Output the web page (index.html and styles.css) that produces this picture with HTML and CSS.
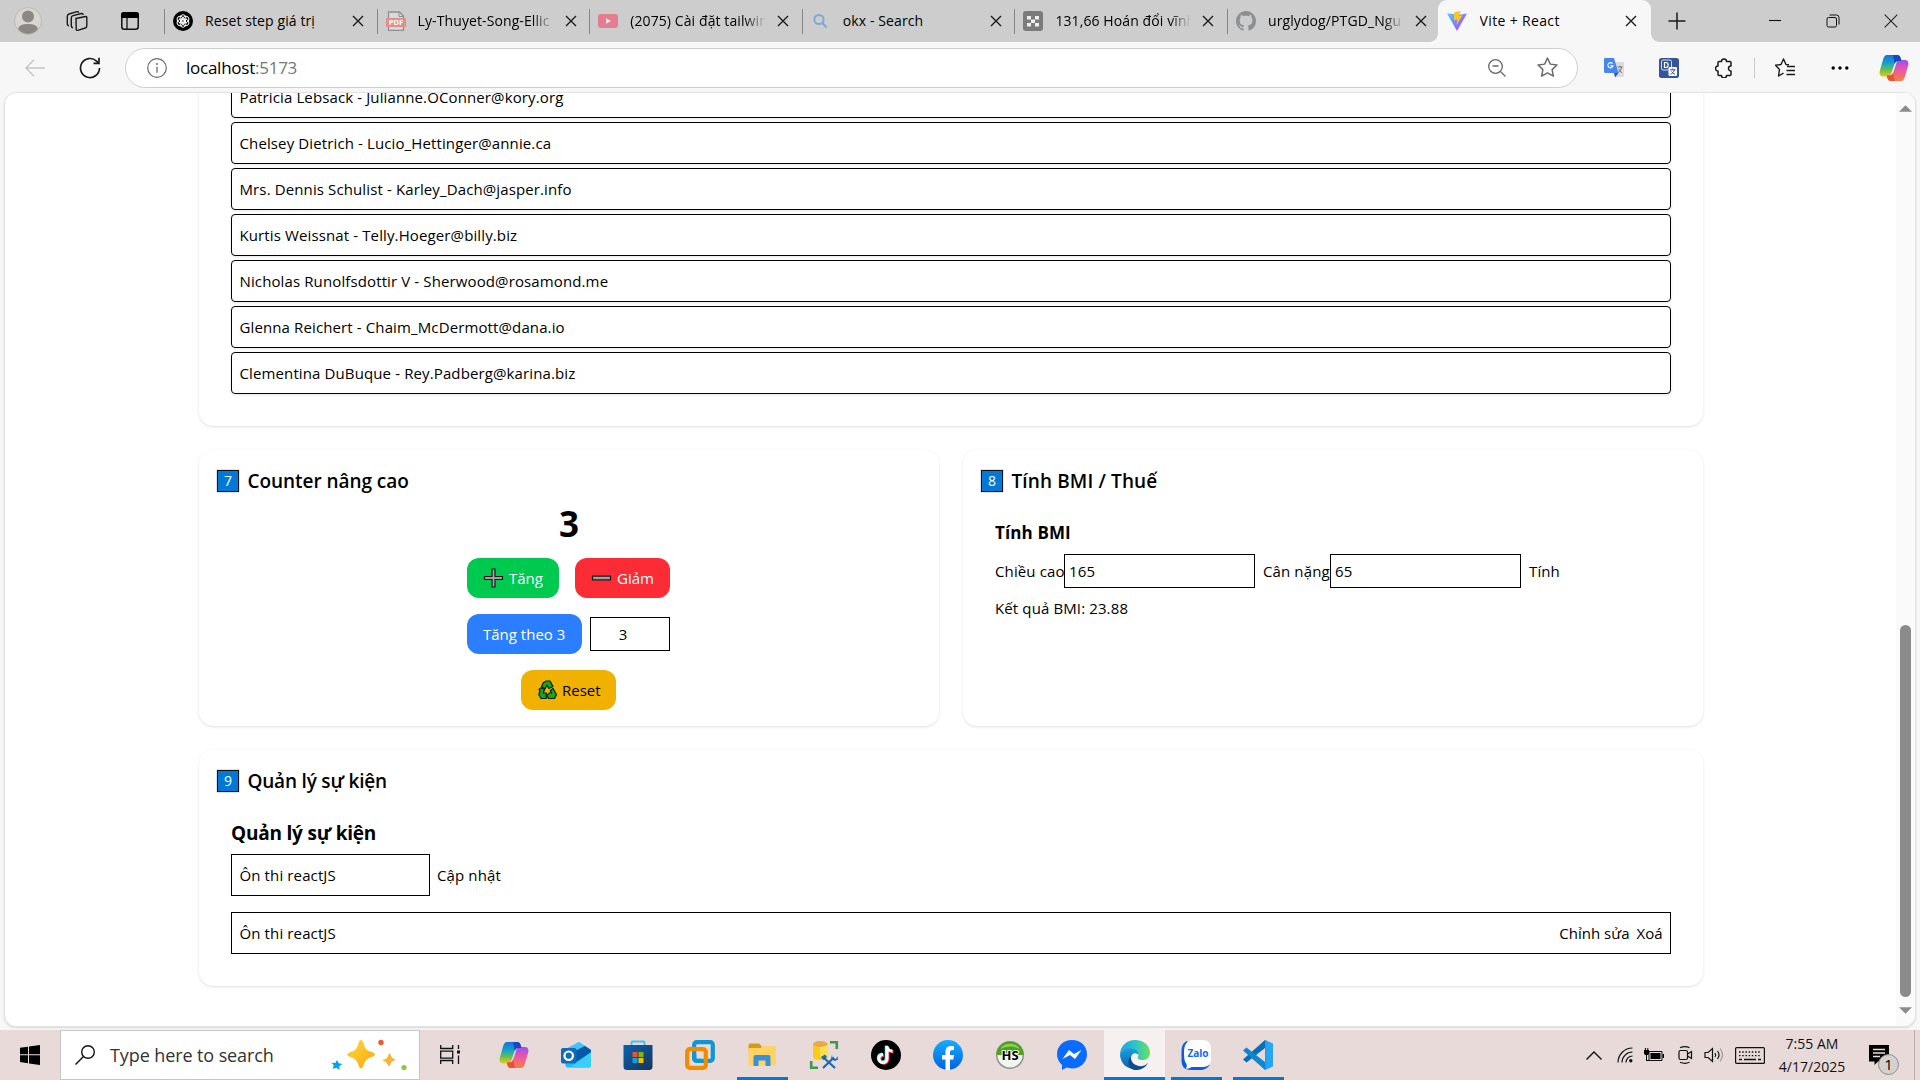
FILE: index.html
```html
<!DOCTYPE html>
<html lang="vi">
<head>
<meta charset="utf-8">
<title>Vite + React</title>
<link rel="stylesheet" href="styles.css">
</head>
<body>
<svg class="defs" width="0" height="0" aria-hidden="true">
  <defs>
    <linearGradient id="cpA" x1="0" y1="0" x2="0" y2="1"><stop offset="0" stop-color="#1b6fe0"/><stop offset=".4" stop-color="#14a5c8"/><stop offset=".7" stop-color="#6cc04a"/><stop offset="1" stop-color="#f5c518"/></linearGradient>
    <linearGradient id="cpB" x1="0" y1="0" x2="0" y2="1"><stop offset="0" stop-color="#a24bf0"/><stop offset=".5" stop-color="#ee5aa0"/><stop offset="1" stop-color="#f7813e"/></linearGradient>
    <linearGradient id="vtA" x1="0" y1="0" x2="1" y2="1"><stop offset="0" stop-color="#41d1ff"/><stop offset="1" stop-color="#bd34fe"/></linearGradient>
    <linearGradient id="gold" x1="0" y1="0" x2="1" y2="1"><stop offset="0" stop-color="#ffd84a"/><stop offset="1" stop-color="#f7a800"/></linearGradient>
    <linearGradient id="store" x1="0" y1="0" x2="1" y2="1"><stop offset="0" stop-color="#0d62b0"/><stop offset="1" stop-color="#173458"/></linearGradient>
    <linearGradient id="fb" x1="0" y1="0" x2="0" y2="1"><stop offset="0" stop-color="#18acfe"/><stop offset="1" stop-color="#0163e0"/></linearGradient>
    <linearGradient id="edA" x1="0" y1="0" x2="1" y2="0"><stop offset="0" stop-color="#1fa6e0"/><stop offset=".5" stop-color="#2cc3c8"/><stop offset="1" stop-color="#6be05a"/></linearGradient>
    <linearGradient id="edB" x1="0" y1="0" x2="0" y2="1"><stop offset="0" stop-color="#1b9de2"/><stop offset="1" stop-color="#0f5ca8"/></linearGradient>
    <symbol id="x" viewBox="0 0 14 14"><path d="M2 2l10 10M12 2L2 12" fill="none" stroke="#1a1a1a" stroke-width="1.4"/></symbol>
    <symbol id="copilot" viewBox="0 0 30 28">
      <path d="M8 1h10c2 0 3 1 3.600 3l.8 3h-3c-2 0-3.200 1-3.900 3l-3 9c-.8 2.400-2 3.500-4 3.500H4C1 22.500 0 20 .8 17L4 5.500C5 2.500 6 1 8 1z" fill="url(#cpA)"/>
      <path d="M22 27H12c-2 0-3-1-3.600-3l-.6-2.500h2.500c2 0 3.200-1 3.900-3l3-9c.8-2.400 2-3.500 4-3.500H26c3 0 4 2.500 3.200 5.500L26 22.500c-1 3-2 4.500-4 4.500z" fill="url(#cpB)"/>
      <path d="M18 1c2 0 3 1 3.600 3l.8 3h-3c-2 0-3 1-3.700 3L14 1z" fill="#1747c4"/>
      <path d="M12 27c-2 0-3-1-3.600-3l-.6-2.500h2.500c2 0 3.200-1 3.900-3L16 27z" fill="#ee4f38"/>
    </symbol>
  </defs>
</svg>

<header class="tabbar">
  <div class="tab-tools">
    <svg class="avatar" viewBox="0 0 28 28"><circle cx="14" cy="14" r="13.500" fill="#d8d6d2" stroke="#bdbab5"/><circle cx="14" cy="9.500" r="6" fill="#8b8783"/><path d="M4 22c1-4 5-5 10-5s9 1 10 5c-5 6.500-15 6.500-20 0z" fill="#8b8783"/></svg>
    <svg class="ws" viewBox="0 0 22 22" fill="none" stroke="#1a1a1a" stroke-width="1.400"><path d="M10 8.500l9.500-2a1 1 0 0 1 1.300 1V16a2 2 0 0 1-1.500 2l-7.500 2.300a1.200 1.200 0 0 1-1.600-1.200z"/><path d="M7 17.500a1.500 1.500 0 0 1-1.700-1.500V8a2.500 2.500 0 0 1 1.800-2.400L15.500 3.500c1-.2 1.600.3 1.700 1.500"/><path d="M3 15.500a1.500 1.500 0 0 1-1.700-1.500V6.500A2.500 2.500 0 0 1 3 4l8-2.300c1-.2 1.700.2 1.800 1"/></svg>
    <svg class="ta" viewBox="0 0 18 18"><rect x=".8" y=".8" width="16.400" height="16.400" rx="2.500" fill="none" stroke="#111" stroke-width="1.500"/><path d="M0 6V3a3 3 0 0 1 3-3h12a3 3 0 0 1 3 3v3z" fill="#000"/><path d="M6 6v11" stroke="#111" stroke-width="1.300"/></svg>
  </div>
  <div class="tab">
    <svg class="fav" viewBox="0 0 20 20"><circle cx="10" cy="10" r="10" fill="#000"/><g fill="none" stroke="#fff" stroke-width="1"><ellipse cx="10" cy="7.500" rx="3" ry="3.800"/><ellipse cx="10" cy="7.500" rx="3" ry="3.800" transform="rotate(60 10 10)"/><ellipse cx="10" cy="7.500" rx="3" ry="3.800" transform="rotate(120 10 10)"/><ellipse cx="10" cy="7.500" rx="3" ry="3.800" transform="rotate(180 10 10)"/><ellipse cx="10" cy="7.500" rx="3" ry="3.800" transform="rotate(240 10 10)"/><ellipse cx="10" cy="7.500" rx="3" ry="3.800" transform="rotate(300 10 10)"/></g></svg>
    <span class="title">Reset step giá trị</span><svg class="x"><use href="#x"/></svg>
  </div>
  <div class="tab">
    <svg class="fav" viewBox="0 0 20 20"><path d="M2.500 1h11l4 4v14.300h-15z" fill="#d6dadb" stroke="#8d8f90" stroke-width="1.300"/><path d="M13 1v4.500h4.500" fill="none" stroke="#8d8f90"/><rect x="0" y="7" width="20" height="9" rx="1" fill="#e38d8d"/><text x="10" y="14.300" text-anchor="middle" class="pdf">PDF</text></svg>
    <span class="title fade">Ly-Thuyet-Song-Ellic</span><svg class="x"><use href="#x"/></svg>
  </div>
  <div class="tab">
    <svg class="fav" viewBox="0 0 20 20"><rect y="3" width="20" height="14" rx="3" fill="#e57c92"/><path d="M8 7.200v5.600l5-2.800z" fill="#fbe6ea"/></svg>
    <span class="title fade">(2075) Cài đặt tailwin</span><svg class="x"><use href="#x"/></svg>
  </div>
  <div class="tab">
    <svg class="fav" viewBox="0 0 20 20" fill="none" stroke="#7fa9d2"><circle cx="8" cy="8.500" r="4.600" stroke-width="2"/><path d="M11.500 12l4 4.500" stroke-width="2.300"/></svg>
    <span class="title">okx - Search</span><svg class="x"><use href="#x"/></svg>
  </div>
  <div class="tab">
    <svg class="fav" viewBox="0 0 20 20"><rect width="20" height="20" rx="3" fill="#7b7b7b"/><path d="M4 5h4v3.500H4zM12 5h4v3.500h-4zM8 8.500h4v3.500H8zM4 12h4v3.500H4zM12 12h4v3.500h-4z" fill="#eee"/></svg>
    <span class="title fade">131,66 Hoán đổi vĩnh</span><svg class="x"><use href="#x"/></svg>
  </div>
  <div class="tab">
    <svg class="fav" viewBox="0 0 16 16"><path fill="#8d9093" d="M8 0C3.580 0 0 3.580 0 8c0 3.540 2.290 6.530 5.470 7.590.4.070.55-.17.55-.38 0-.19-.01-.82-.01-1.490-2.010.37-2.530-.49-2.690-.94-.09-.23-.48-.94-.82-1.130-.28-.15-.68-.52-.01-.53.63-.01 1.080.58 1.230.82.72 1.210 1.870.87 2.330.66.070-.52.28-.87.51-1.070-1.780-.2-3.640-.89-3.640-3.950 0-.87.31-1.590.82-2.150-.08-.2-.36-1.020.08-2.120 0 0 .67-.21 2.200.82.640-.18 1.320-.27 2-.27s1.360.090 2 .27c1.530-1.040 2.200-.82 2.200-.82.440 1.100.16 1.920.080 2.120.51.560.82 1.270.82 2.150 0 3.070-1.870 3.750-3.650 3.950.29.250.54.730.54 1.480 0 1.070-.01 1.930-.01 2.200 0 .21.150.46.55.38A8.010 8.010 0 0 0 16 8c0-4.420-3.580-8-8-8z"/></svg>
    <span class="title fade">urglydog/PTGD_Ngu</span><svg class="x"><use href="#x"/></svg>
  </div>
  <div class="tab active">
    <svg class="fav" viewBox="0 0 20 20"><path d="M0 2.500l10 17.500L20 2.500l-8 1.300-7.500-1z" fill="url(#vtA)"/><path d="M7 1.500l7-1.500-2.300 5 3.800-.7L9.500 14l.8-5.500-3.300.8z" fill="#ffc61e"/></svg>
    <span class="title">Vite + React</span><svg class="x"><use href="#x"/></svg>
  </div>
  <svg class="plus" viewBox="0 0 18 18"><path d="M9 .5v17M.5 9h17" stroke="#1a1a1a" stroke-width="1.500"/></svg>
  <div class="winbtns">
    <svg viewBox="0 0 14 14"><path d="M1 6.500h12" stroke="#111" stroke-width="1.100"/></svg>
    <svg viewBox="0 0 14 14" fill="none" stroke="#111"><rect x="1" y="3.500" width="9.500" height="9.500" rx="1.500"/><path d="M3.500 1h7a2.500 2.500 0 0 1 2.500 2.500v7"/></svg>
    <svg viewBox="0 0 14 14"><path d="M.7.7l12.600 12.600M13.300.7L.7 13.300" stroke="#222" stroke-width="1.100"/></svg>
  </div>
</header>

<nav class="toolbar">
  <svg class="back" viewBox="0 0 20 18" fill="none" stroke="#c4c4c4" stroke-width="1.400"><path d="M20 9H1M9 .7L.9 9 9 17.300"/></svg>
  <svg class="reload" viewBox="0 0 22 22" fill="none" stroke="#1a1a1a" stroke-width="1.700"><path d="M20.500 11a9.500 9.500 0 1 1-3-6.900l2 2"/><path d="M20 .8v5.500h-5.500"/></svg>
  <div class="address">
    <svg class="info" viewBox="0 0 20 20"><circle cx="10" cy="10" r="9.300" fill="none" stroke="#6a6a6a" stroke-width="1.200"/><path d="M10 8.800v6" stroke="#6a6a6a" stroke-width="1.300"/><circle cx="10" cy="6" r="1" fill="#6a6a6a"/></svg>
    <span class="url">localhost<span class="port">:5173</span></span>
    <svg class="zo" viewBox="0 0 18 18" fill="none" stroke="#6a6a6a" stroke-width="1.300"><circle cx="7.500" cy="7.500" r="6.800"/><path d="M12.500 12.500l5 5M4.500 7h6"/></svg>
    <svg class="st" viewBox="0 0 20 20" fill="none" stroke="#6a6a6a" stroke-width="1.400" stroke-linejoin="round"><path d="M10 1l2.700 5.800 6.300.8-4.600 4.400 1.200 6.300L10 15.200l-5.600 3.100L5.600 12 1 7.600l6.300-.8z"/></svg>
  </div>
  <svg class="ext gt" viewBox="0 0 20 20"><path d="M8 4h11a1 1 0 0 1 1 1v13a1 1 0 0 1-1 1h-8z" fill="#dcdcdc"/><path d="M1 0h9l4.500 15H1.500A1.500 1.500 0 0 1 0 13.500V1.200A1.200 1.200 0 0 1 1 0z" fill="#4586f3"/><path d="M10 15h4.500L11 19.500z" fill="#2b57bb"/><path d="M13.500 9h5M16 7.800V9M17.700 9c-.6 2.500-2 4.300-3.700 5.600M14.500 11c.8 1.500 2 2.800 3.500 3.800" stroke="#68777d" fill="none"/><path d="M8.600 5.700A2.600 2.600 0 1 0 9 7.900H6.400" stroke="#fff" stroke-width="1.100" fill="none"/></svg>
  <svg class="ext dt" viewBox="0 0 20 20"><rect width="20" height="20" rx="2.500" fill="#35559b"/><rect x="2.500" y="2" width="10" height="10" rx="1.500" fill="none" stroke="#fff" stroke-width=".8"/><path d="M5.500 4.500v5h1.200a2.500 2.500 0 0 0 0-5z" fill="none" stroke="#fff" stroke-width="1.200"/><rect x="9.500" y="9" width="8.500" height="9" rx="1.200" fill="#fff"/><path d="M11 11.800h5.500M13.700 10.500v1.300M15.500 11.800c-.6 2-2 3.500-4 4.500M12.500 13.500c.8 1.200 2 2 3.500 2.800" stroke="#35559b" fill="none"/></svg>
  <svg class="ext pz" viewBox="0 0 18 20" fill="none" stroke="#1a1a1a" stroke-width="1.500" stroke-linejoin="round"><path d="M6.500 3.500a2.500 2.500 0 0 1 5 0H15a1 1 0 0 1 1 1V8a2.300 2.300 0 0 0 0 5v3.500a1 1 0 0 1-1 1h-3.500a2.500 2.500 0 0 1-5 0H4a1 1 0 0 1-1-1V13a2.500 2.500 0 1 1 0-5V4.500a1 1 0 0 1 1-1z"/></svg>
  <i class="tsep"></i>
  <svg class="ext fv" viewBox="0 0 20 20" fill="none" stroke="#1a1a1a" stroke-width="1.400" stroke-linejoin="round"><path d="M14 6.800L11 6.500 8.500 1 6 6.500l-5.500.8 4 4.200-1 6.500 5-2.800"/><path d="M12 8.500h8M11.500 12.500H20M11.500 16.500H20"/></svg>
  <svg class="ext dots" viewBox="0 0 18 4"><circle cx="2.200" cy="2" r="1.700"/><circle cx="9" cy="2" r="1.700"/><circle cx="15.800" cy="2" r="1.700"/></svg>
  <svg class="cp"><use href="#copilot"/></svg>
</nav>

<div class="frame">
  <div class="page">
    <main class="grid">
      <section class="card users">
        <ul class="list">
          <li>Patricia Lebsack - Julianne.OConner@kory.org</li>
          <li>Chelsey Dietrich - Lucio_Hettinger@annie.ca</li>
          <li>Mrs. Dennis Schulist - Karley_Dach@jasper.info</li>
          <li>Kurtis Weissnat - Telly.Hoeger@billy.biz</li>
          <li>Nicholas Runolfsdottir V - Sherwood@rosamond.me</li>
          <li>Glenna Reichert - Chaim_McDermott@dana.io</li>
          <li>Clementina DuBuque - Rey.Padberg@karina.biz</li>
        </ul>
      </section>
      <section class="card counter">
        <h2><b class="num">7</b>Counter nâng cao</h2>
        <div class="count">3</div>
        <div class="controls">
          <div class="row spread">
            <button class="btn green"><svg viewBox="0 0 20 20"><path d="M8.500 1h3v7.500H19v3h-7.500V19h-3v-7.500H1v-3h7.500z" fill="#a3a0a0" stroke="#1c1c1c" stroke-width="1.200"/></svg>Tăng</button>
            <button class="btn red"><svg viewBox="0 0 20 20"><path d="M1 8.200h18v3.600H1z" fill="#a3a0a0" stroke="#1c1c1c" stroke-width="1.200"/></svg>Giảm</button>
          </div>
          <div class="row">
            <button class="btn blue">Tăng theo 3</button>
            <span class="field step">3</span>
          </div>
          <button class="btn amber"><svg viewBox="0 0 20 20"><g stroke="#06210a" stroke-width="1.200" stroke-linejoin="round" fill="#16a51f"><path d="M6 2.500L9 1h3.500l3 5.500-4 2L9.500 5.500 7.500 8.800 4 6.500z"/><path d="M15.500 8.500l3.500 6-2 4h-6l-1.500-3 2-2.500h2.500l-1.200-2.200z"/><path d="M3.500 7.800L7 9.500 5.800 13h3v5.500H3.500l-2.300-4 1.300-3.500-1-1.500z"/></g></svg>Reset</button>
        </div>
      </section>
      <section class="card">
        <h2><b class="num">8</b><span class="loose">Tính BMI / Thuế</span></h2>
        <div class="inner">
          <h3 class="small">Tính BMI</h3>
          <div class="bmi">
            <label>Chiều cao</label><span class="field wide">165</span>
            <label class="second">Cân nặng</label><span class="field wide">65</span>
            <span class="act">Tính</span>
          </div>
          <p class="result">Kết quả BMI: 23.88</p>
        </div>
      </section>
      <section class="card events">
        <h2><b class="num">9</b><span class="tight">Quản lý sự kiện</span></h2>
        <div class="inner">
          <h3 class="tight">Quản lý sự kiện</h3>
          <div class="edit"><span class="box">Ôn thi reactJS</span><span>Cập nhật</span></div>
          <div class="box item"><span>Ôn thi reactJS</span><span class="acts"><span>Chỉnh sửa</span><span>Xoá</span></span></div>
        </div>
      </section>
    </main>
    <div class="scroll">
      <svg class="arrow" viewBox="0 0 14 7"><path d="M7 0l7 7H0z" fill="#8b8b8b"/></svg>
      <div class="thumb"></div>
      <svg class="arrow" viewBox="0 0 14 7"><path d="M7 7L0 0h14z" fill="#8b8b8b"/></svg>
    </div>
  </div>
</div>

<footer class="taskbar">
  <div class="start"><svg viewBox="0 0 20 20"><path d="M0 2.800L8 1.700v7.600H0zM9 1.500L20 0v9.300H9zM0 10.300h8v7.900l-8-1.100zM9 10.300h11V20L9 18.400z"/></svg></div>
  <div class="search">
    <svg class="mag" viewBox="0 0 20 20" fill="none" stroke="#111" stroke-width="1.400"><circle cx="13" cy="7" r="6.300"/><path d="M8.500 11.500L.5 19.500"/></svg>
    <span>Type here to search</span>
    <svg class="spark" viewBox="0 0 76 32"><path d="M30 1q2 0 3 5 1.500 5 5 6 6 2 6 3.500T38 19q-3.500 1.500-5 6-1.500 4.500-3 4.500t-3-4.500q-1.500-4.500-5-6-6-2-6-3.500t6-3.500q3.500-1 5-6 1-5 3-5z" fill="url(#gold)"/><path d="M58 14q1 0 2 3t4.500 3.700q0 .3-2.500 1.300t-2.500 3q-1 2.500-1.500 2.500t-1.700-3q-1-2-4.800-3 0-1 3.300-1.500 2-1 3.200-6z" fill="#f9b233"/><circle cx="50" cy="3.500" r="2.700" fill="#f05a28"/><circle cx="73" cy="28.500" r="2.600" fill="#8cc63f"/><path d="M6 21l1.800 3.200 3.700.8-3.200 2 .2 4-3-2.200-4 1 1.300-3.500L.300 23.800l4 .2z" fill="#00a4ef"/></svg>
  </div>
  <div class="tview"><svg viewBox="0 0 20 20" fill="none" stroke="#111" stroke-width="1.300"><path d="M.7 0v3.500h12V0M.7 19v-3.500h12V19M.7 6.200h12v7H.7zM18.500 0v4M18.500 10.500V19"/><path d="M17 5.500h3v3h-3z" fill="#111" stroke="none"/></svg></div>
  <div class="apps">
    <div class="app"><svg viewBox="0 0 30 28"><use href="#copilot" width="30" height="28"/></svg></div>
    <div class="app"><svg viewBox="0 0 30 30"><path d="M5 9l13-7 12 8v15a2.500 2.500 0 0 1-2.500 2.500H7A2.500 2.500 0 0 1 4.500 25z" fill="#28b8f0"/><path d="M5 9l13-7 6 4L9 16z" fill="#40c4f8"/><path d="M8 14L24 6l6 4v3l-15 9z" fill="#0b57a8"/><path d="M30 12v13a2.500 2.500 0 0 1-2.500 2.500H9z" fill="#38d0f8"/><rect y="8" width="15.500" height="15.500" rx="2" fill="#0f6cbd"/><circle cx="7.700" cy="15.700" r="4.200" fill="none" stroke="#fff" stroke-width="2.200"/></svg></div>
    <div class="app"><svg viewBox="0 0 30 30"><path d="M8.500 6V2.500a1 1 0 0 1 1-1h11a1 1 0 0 1 1 1V6" fill="none" stroke="#43c3f3" stroke-width="2"/><path d="M.5 5h29v21.500a3.500 3.500 0 0 1-3.500 3.500H4a3.500 3.500 0 0 1-3.500-3.500z" fill="url(#store)"/><path d="M9.500 12h5v5h-5z" fill="#f25022"/><path d="M15.500 12h5v5h-5z" fill="#7fba00"/><path d="M9.500 18h5v5h-5z" fill="#00a4ef"/><path d="M15.500 18h5v5h-5z" fill="#ffb900"/></svg></div>
    <div class="app"><svg viewBox="0 0 30 30" fill="none" stroke-width="4.200"><rect x="9.200" y="2.200" width="18.600" height="18.600" rx="2.500" stroke="#0a98d8"/><rect x="2.200" y="9.200" width="18.600" height="18.600" rx="2.500" stroke="#f38b00"/><path d="M9.200 14v4.300a2.500 2.500 0 0 0 2.500 2.500H16" stroke="#0a98d8"/></svg></div>
    <div class="app"><svg viewBox="0 0 30 30"><path d="M1.500 5a1.500 1.500 0 0 1 1.500-1.500h9l2.500 2.500v4h-13z" fill="#dd9a07"/><path d="M1.500 8H14l2-2h11.500A1.200 1.200 0 0 1 29 7.200V24.500a1 1 0 0 1-1 1H2.500a1 1 0 0 1-1-1z" fill="#ffd361"/><path d="M6.500 26V17a2 2 0 0 1 2-2h13a2 2 0 0 1 2 2v9h-5v-5.500h-7V26z" fill="#3a8fd8"/></svg><i></i></div>
    <div class="app"><svg viewBox="0 0 30 30"><path d="M4 4v13c0 2 3.500 3 7.500 3s7-1 7-3V4z" fill="#fbcb1a"/><path d="M11 5h7.500v12H11z" fill="#fde04a"/><ellipse cx="11.300" cy="4" rx="7.300" ry="3" fill="#e8a94a"/><path d="M21 2.300h6.800V9M2.200 21v6.800H9" fill="none" stroke="#3e9a48" stroke-width="2.600"/><path d="M14.500 17.500L26 28M25 17.500L14 28" stroke="#1668b8" stroke-width="2.200"/><path d="M12 17l4-2.500 2 2.500-3.500 3zM23 14.500l.5 3.500 3.500 1 1.500-3 .5 3.500-3 1.500-4-2z" fill="#1668b8"/></svg></div>
    <div class="app"><svg viewBox="0 0 30 30"><circle cx="15" cy="15" r="15" fill="#000"/><g fill="none" stroke-width="3"><path d="M16 6v12.500a4 4 0 1 1-4-4M16 7q1 4 5.500 4" stroke="#25f4ee" transform="translate(-.8 -.5)"/><path d="M16 6v12.500a4 4 0 1 1-4-4M16 7q1 4 5.500 4" stroke="#fe2c55" transform="translate(1 .8)"/><path d="M16 6v12.500a4 4 0 1 1-4-4M16 7q1 4 5.500 4" stroke="#fff"/></g></svg></div>
    <div class="app"><svg viewBox="0 0 30 30"><circle cx="15" cy="15" r="15" fill="url(#fb)"/><path d="M12.500 30V19.500H9V15h3.500v-3c0-4 2-6 5.500-6 1.500 0 3 .3 3 .3v3.800h-1.800c-1.700 0-2.200 1-2.200 2.200V15h4l-.7 4.500H17V30z" fill="#fff"/></svg></div>
    <div class="app"><svg viewBox="0 0 30 30"><circle cx="15" cy="15" r="13.300" fill="#f2f4f0" stroke="#8b948a" stroke-width="1.500"/><path d="M1.500 15a13.500 13.500 0 0 1 27 0z" fill="#4aa31c"/><path d="M5 9a12 12 0 0 1 20 0q-10-5-20 0z" fill="#8bd058"/><text x="15" y="19.600" text-anchor="middle" class="hs">HS</text></svg></div>
    <div class="app"><svg viewBox="0 0 30 30"><path d="M15 0C6.500 0 0 6 0 14.300c0 4.400 2 8 5 10.600V30l4.700-2.400c1.700.5 3.400.8 5.300.8 8.500 0 15-6 15-14.200S23.500 0 15 0z" fill="#0a6cff"/><path d="M5.500 19l6.500-9 5 4 7.500-4-6.500 9-5-4z" fill="#fff"/></svg></div>
    <div class="app on"><svg viewBox="0 0 30 30"><path d="M0 15C0 6 7 0 15 0c9 0 15 6 15 12.500 0 5-3.500 7.500-7.500 7.500-4 0-5.500-1.500-4.500-3 1.500-3 0-7-6-7.500C6 9 2 12 0 15z" fill="url(#edA)"/><path d="M0 15c2-4 6-6.500 10.500-6.500 5 0 8.300 3 8 6.500-2-3-7-2.500-7.500 2.500-.5 6 4 10 9 11A15 15 0 0 1 0 15z" fill="url(#edB)"/><path d="M11 16.500c-1 7 6 10.500 11.500 9.500 2.500-.5 4.500-2 5.500-3.500-2 5-7.500 8-13 7.500C8 29 6.500 20 11 16.500z" fill="#114a8b"/></svg><i></i></div>
    <div class="app"><svg viewBox="0 0 30 30"><path d="M6 1C2 3 .5 6 .5 12v8c0 7 3 10 10 10h8c5 0 8-1.500 10-5z" fill="#0a5ce0"/><path d="M13 0h8c6 0 9 3 9 9v10c0 5-3 8-8 8H11c-2 1-4 2-6.500 1.500C6 27.500 6 26 5.500 24 3.500 22 3 18 3 13c0-9 3-13 10-13z" fill="#fff"/><text x="17" y="17.300" text-anchor="middle" class="zalo">Zalo</text></svg><i></i></div>
    <div class="app"><svg viewBox="0 0 30 30"><path d="M22 0l8 3.500v23L22 30z" fill="#26a6f2"/><path d="M22 0v8L3.500 22.500 0 19.500z" fill="#0a6db5"/><path d="M22 30v-8L3.500 7.500 0 10.500z" fill="#0f86d0"/><path d="M22 0l1.500 1v28L22 30z" fill="#1f9cf0"/></svg><i></i></div>
  </div>
  <div class="tray">
    <svg class="chev" viewBox="0 0 16 9" fill="none" stroke="#111" stroke-width="1.400"><path d="M.5 8.500L8 1l7.500 7.500"/></svg>
    <svg class="wifi" viewBox="0 0 16 16" fill="none" stroke="#111" stroke-width="1.200"><path d="M1 15.500A14.500 14.500 0 0 1 15.500 1M5 15.500A10.500 10.500 0 0 1 15.500 5M9 15.500A6.500 6.500 0 0 1 15.500 9" /><circle cx="13.800" cy="13.800" r="1.700" fill="#111" stroke="none"/></svg>
    <svg class="bat" viewBox="0 0 20 14"><path d="M5 3.500h13v9H5z" fill="none" stroke="#111"/><path d="M6.500 5h10v6h-10zM18.500 6H20v4h-1.500zM0 2h5v3.500L4 7H1L0 5.500zM.9 0h1v2h-1zM3.300 0h1v2h-1zM2 7h1v5h2v1H2z"/></svg>
    <svg class="cam" viewBox="0 0 15 18" fill="none" stroke="#111" stroke-width="1.200"><rect x="1" y="4.500" width="8.500" height="9" rx="1.500"/><path d="M9.500 8l4-2.500v7L9.500 10M2 1.700q5-2 9.500 0M2 16.300q5 2 9.500 0"/></svg>
    <svg class="spk" viewBox="0 0 20 16" fill="none" stroke="#111" stroke-width="1.200"><path d="M1 5.500h3L8.500 1.500v13L4 10.500H1zM11 6q1.500 2 0 4M13.500 4q3 4 0 8"/><path d="M16 1.500q5 6.500 0 13" stroke="#a09795"/></svg>
    <svg class="kbd" viewBox="0 0 30 17"><rect x=".6" y=".6" width="28.800" height="15.800" rx="1" fill="none" stroke="#111" stroke-width="1.200"/><path d="M4 5h22M4 8.700h22" stroke="#111" stroke-width="1.300" stroke-dasharray="1.500 1.700"/><path d="M4 12.500h3M9 12.500h12M23 12.500h3" stroke="#111" stroke-width="1.300"/></svg>
    <div class="clock"><span>7:55 AM</span><span>4/17/2025</span></div>
    <div class="notif"><svg viewBox="0 0 20 20"><path d="M0 0h20v16.500H9L5.500 20v-3.500H0z"/><path d="M4 4.500h12M4 8h12M4 11.500h7" stroke="#e9dcda" stroke-width="1.300"/></svg><span class="badge">1</span></div>
    <i class="desk"></i>
  </div>
</footer>
</body>
</html>
```
FILE: styles.css
```css
* { box-sizing: border-box; }
html, body { height: 100%; }
body {
  margin: 0;
  display: flex;
  flex-direction: column;
  overflow: hidden;
  background: #f7f7f7;
  color: #000;
  font-family: "Open Sans", "Noto Sans", sans-serif;
  font-size: 15px;
  line-height: 24px;
}
svg { display: block; flex: none; }
h2, h3, p, ul { margin: 0; padding: 0; }
.defs { position: absolute; }

/* Tab strip */
.tabbar {
  height: 42px;
  flex: none;
  display: flex;
  align-items: center;
  background: #cdcdcd;
}
.tab-tools { width: 164px; flex: none; display: flex; align-items: center; padding-left: 14px; }
.avatar { width: 28px; height: 28px; }
.ws { width: 22px; height: 22px; margin-left: 24px; }
.ta { width: 18px; height: 18px; margin-left: 33px; }
.tab {
  width: 212.6px;
  height: 42px;
  flex: none;
  display: flex;
  align-items: center;
  padding-left: 9px;
  background: linear-gradient(#858585, #858585) 0 9px / 1px 25px no-repeat;
}
.tab.active {
  position: relative;
  width: 213px;
  margin-left: -2px;
  background: #f7f7f7;
  border-radius: 9px 9px 0 0;
}
.tab.active::before, .tab.active::after {
  content: "";
  position: absolute;
  bottom: 0;
  width: 8px;
  height: 8px;
}
.tab.active::before { left: -8px; background: radial-gradient(circle at 0 0, transparent 7.5px, #f7f7f7 8px); }
.tab.active::after { right: -8px; background: radial-gradient(circle at 100% 0, transparent 7.5px, #f7f7f7 8px); }
.fav { width: 20px; height: 20px; }
.title {
  width: 136px;
  margin: 0 10px 0 12px;
  overflow: hidden;
  white-space: nowrap;
  font-size: 14px;
  letter-spacing: .1px;
}
.active .title { margin-left: 13px; margin-right: 8px; letter-spacing: .35px; }
.title.fade { -webkit-mask-image: linear-gradient(90deg, #000 84%, transparent); mask-image: linear-gradient(90deg, #000 84%, transparent); }
.x { width: 14px; height: 14px; }
.plus { width: 18px; height: 18px; margin-left: 17px; }
.winbtns { margin-left: auto; padding-right: 22px; display: flex; gap: 44px; }
.winbtns svg { width: 14px; height: 14px; }
.pdf { font: 700 7.5px "Open Sans", sans-serif; fill: #fff; }

/* Address row */
.toolbar { height: 50px; flex: none; display: flex; align-items: center; padding: 1px 0 0 25px; }
.back { width: 20px; height: 18px; }
.reload { width: 22px; height: 22px; margin-left: 34px; }
.address {
  width: 1453px;
  height: 40px;
  margin-left: 24px;
  padding: 0 19px 0 21px;
  display: flex;
  align-items: center;
  background: #fff;
  border: 1px solid #cfcfcf;
  border-radius: 20px;
}
.info { width: 20px; height: 20px; }
.url { margin-left: 19px; font-size: 17px; letter-spacing: -.25px; }
.port { color: #767676; }
.zo { width: 18px; height: 18px; margin-left: auto; }
.st { width: 21px; height: 21px; margin-left: 31px; }
.ext { width: 20px; height: 20px; }
.gt { margin-left: 26px; }
.dt { margin-left: 35px; }
.pz { width: 18px; margin-left: 36px; }
.tsep { width: 1px; height: 20px; margin-left: 21px; background: #c8c8c8; }
.fv { margin-left: 20px; }
.dots { width: 18px; height: 4px; margin-left: 36px; }
.cp { width: 30px; height: 28px; margin-left: 30px; }

/* Page viewport */
.frame { flex: 1; min-height: 0; padding: 0 4px 3px; }
.page {
  height: 100%;
  display: flex;
  justify-content: space-between;
  overflow: hidden;
  background: #fff;
  border: 1px solid #e3e3e3;
  border-radius: 12px;
  box-shadow: 0 1px 2px rgba(0, 0, 0, .12);
}
.grid {
  width: 1504px;
  margin: -17px 0 0 194px;
  display: grid;
  grid-template-columns: 1fr 1fr;
  grid-template-rows: 350px 276px 236px;
  gap: 24px;
  letter-spacing: .12px;
}
.card {
  background: #fff;
  border-radius: 14px;
  padding: 16px;
  box-shadow: 0 1px 3px rgba(0, 0, 0, .1), 0 1px 2px -1px rgba(0, 0, 0, .1);
}
.users { grid-column: 1 / 3; padding: 0 32px 32px; border-radius: 0 0 14px 14px; }
.events { grid-column: 1 / 3; }
.list { list-style: none; display: flex; flex-direction: column; gap: 4px; }
.list li { height: 42px; padding: 8px 7.5px; border: 1px solid #000; border-radius: 4px; box-shadow: 0 1px 3px rgba(0, 0, 0, .1); }
h2 {
  height: 28px;
  padding-top: 2px;
  display: flex;
  align-items: center;
  font-size: 19px;
  font-weight: 600;
  line-height: 26px;
  letter-spacing: -.05px;
}
.loose { letter-spacing: .12px; }
.tight { letter-spacing: -.2px; }
.num {
  width: 22px;
  height: 22px;
  margin: 0 8.5px 0 2px;
  border: 1px solid #111;
  box-shadow: 0 0 1px #555;
  background: #0078d7;
  color: #fff;
  font-size: 14px;
  font-weight: 400;
  line-height: 19px;
  text-align: center;
}
.count { margin-top: 8px; height: 44px; text-align: center; font-size: 35px; font-weight: 700; line-height: 44px; }
.controls { width: 203px; margin: 12px 0 0 252px; display: flex; flex-direction: column; align-items: center; gap: 16px; }
.row { width: 100%; display: flex; align-items: center; gap: 8px; }
.spread { justify-content: space-between; }
.btn {
  height: 40px;
  padding: 0 16px;
  display: flex;
  align-items: center;
  gap: 5px;
  border: 0;
  border-radius: 12px;
  color: #fff;
  font: inherit;
  white-space: nowrap;
}
.btn svg { width: 21px; height: 20px; }
.green { width: 92px; background: #00c950; }
.red { width: 95px; background: #fb2c36; }
.blue { width: 115px; background: #2b7fff; }
.amber { width: 95px; background: #f0b100; color: #000; gap: 4px; }
.field { height: 34px; border: 1px solid #000; padding: 0 4px; line-height: 32px; }
.step { width: 80px; padding-right: 18px; text-align: center; }
.wide { width: 191px; }
.inner { padding: 24px 16px 0; }
h3 { font-size: 19px; font-weight: 700; line-height: 28px; padding-top: 1px; height: 28px; }
h3.small { font-size: 17px; }
.bmi { display: flex; align-items: center; margin-top: 8px; }
.bmi label { width: 69px; white-space: nowrap; }
.bmi .second { width: 67px; margin-left: 8px; }
.act { margin-left: 8px; }
.result { margin-top: 8px; }
.edit { display: flex; align-items: center; gap: 7px; margin-top: 8px; }
.box { width: 199px; height: 42px; padding: 8px 7.5px; border: 1px solid #000; }
.item { width: 100%; margin-top: 16px; display: flex; justify-content: space-between; }
.acts { display: flex; gap: 7px; letter-spacing: 0; }
.scroll { width: 19px; flex: none; padding: 12px 0; display: flex; flex-direction: column; align-items: center; background: #fafafa; }
.arrow { width: 13px; height: 7px; }
.thumb { width: 11px; height: 372px; margin: auto 0 10px; border-radius: 6px; background: #8b8b8b; }

/* Windows taskbar */
.taskbar { height: 50px; flex: none; display: flex; background: #e7dad8; }
.start { width: 60px; display: flex; align-items: center; justify-content: center; }
.start svg { width: 20px; height: 20px; }
.search {
  width: 360px;
  display: flex;
  align-items: center;
  padding-left: 14px;
  background: #fff;
  border: 1px solid #c6c6c6;
  color: #333;
  font-size: 18px;
  letter-spacing: -.1px;
}
.mag { width: 20px; height: 20px; margin-right: 15px; }
.spark { width: 76px; height: 32px; margin: 0 12px 0 auto; }
.tview { width: 63px; padding: 15px 0 0 20px; }
.tview svg { width: 20px; height: 20px; }
.apps { display: flex; }
.app { width: 62px; display: flex; align-items: center; justify-content: center; position: relative; }
.app svg { width: 30px; height: 30px; }
.app.on { width: 61px; margin-left: 1px; background: #f6f1f0; }
.app i { position: absolute; left: 6px; right: 5px; bottom: 0; height: 3px; background: #0078d7; }
.app.on i { left: 0; right: 0; }
.hs { font: 700 13px "Open Sans", sans-serif; stroke: #fff; stroke-width: 2px; paint-order: stroke; }
.zalo { font: 700 10px "Open Sans", sans-serif; fill: #0a68ff; }
.tray { flex: 1; display: flex; align-items: center; justify-content: flex-end; }
.chev { width: 16px; height: 9px; }
.wifi { width: 16px; height: 16px; margin-left: 15px; }
.bat { width: 20px; height: 14px; margin-left: 11px; }
.cam { width: 15px; height: 18px; margin-left: 14px; }
.spk { width: 20px; height: 16px; margin-left: 11px; }
.kbd { width: 30px; height: 17px; margin-left: 11px; }
.clock { width: 94px; display: flex; flex-direction: column; align-items: center; line-height: 23px; color: #111; font-size: 14px; }
.notif { position: relative; width: 20px; height: 20px; margin-left: 10px; }
.notif svg { width: 20px; height: 20px; }
.badge {
  position: absolute;
  left: 9px;
  top: 9px;
  width: 21px;
  height: 21px;
  border: 1px solid #8f8a89;
  border-radius: 50%;
  background: #d3d0cf;
  font-size: 15px;
  line-height: 19px;
  text-align: center;
}
.desk { width: 1px; height: 50px; margin: 0 5px 0 25px; background: #b8acab; }
```
